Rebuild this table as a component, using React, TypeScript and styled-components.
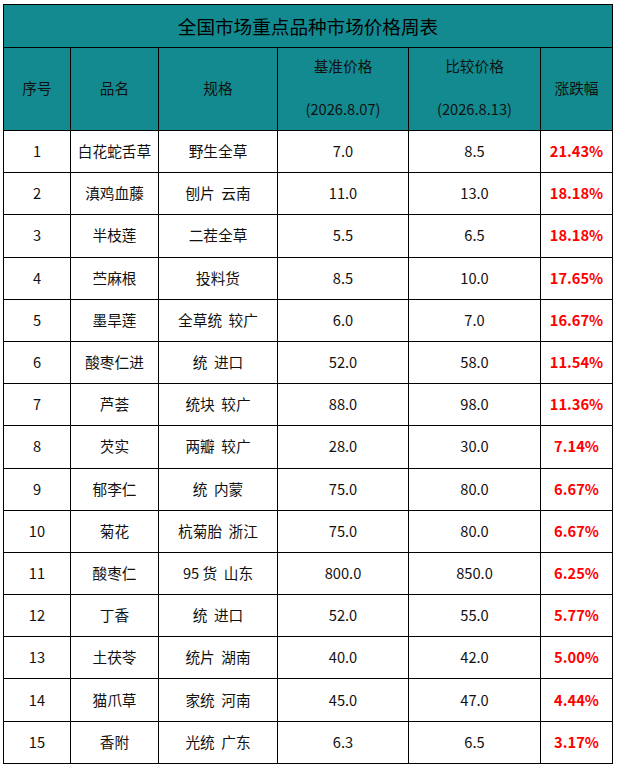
import React from "react";
import styled, { createGlobalStyle } from "styled-components";

const GlobalStyle = createGlobalStyle`
  html, body { margin: 0; padding: 0; background: #ffffff; }
  body { font-family: "Noto Sans CJK SC", "Noto Sans", sans-serif; }
`;

const Page = styled.div`
  padding: 4px 0 0 3px;
`;

const Table = styled.div`
  display: grid;
  width: 608px;
  grid-template-columns: 66px 87px 118px 130px 131px 71px;
  grid-template-rows: 42px 82px repeat(15, 41.2px);
  gap: 1px;
  padding: 1px;
  background: #000000;
`;

const TitleCell = styled.div`
  grid-column: 1 / -1;
  background: #128a8f;
  display: flex;
  align-items: center;
  justify-content: center;
  padding-bottom: 1px;
  font-size: 18.6px;
  color: #000;
`;

const HeadCell = styled.div`
  background: #128a8f;
  display: flex;
  flex-direction: column;
  align-items: center;
  justify-content: center;
  gap: 21.5px;
  padding-bottom: 3px;
  font-size: 14.67px;
  line-height: 21.5px;
  color: #111;
`;

const Cell = styled.div<{ $up?: boolean }>`
  background: #ffffff;
  display: flex;
  align-items: center;
  justify-content: center;
  padding-bottom: 2px;
  font-size: 14.67px;
  color: ${(p) => (p.$up ? "#ff0000" : "#111")};
  font-weight: ${(p) => (p.$up ? 700 : 400)};
  white-space: pre;
`;

const rows: [string, string, string, string, string, string][] = [
  ["1", "白花蛇舌草", "野生全草", "7.0", "8.5", "21.43%"],
  ["2", "滇鸡血藤", "刨片  云南", "11.0", "13.0", "18.18%"],
  ["3", "半枝莲", "二茬全草", "5.5", "6.5", "18.18%"],
  ["4", "苎麻根", "投料货", "8.5", "10.0", "17.65%"],
  ["5", "墨旱莲", "全草统  较广", "6.0", "7.0", "16.67%"],
  ["6", "酸枣仁进", "统  进口", "52.0", "58.0", "11.54%"],
  ["7", "芦荟", "统块  较广", "88.0", "98.0", "11.36%"],
  ["8", "芡实", "两瓣  较广", "28.0", "30.0", "7.14%"],
  ["9", "郁李仁", "统  内蒙", "75.0", "80.0", "6.67%"],
  ["10", "菊花", "杭菊胎  浙江", "75.0", "80.0", "6.67%"],
  ["11", "酸枣仁", "95 货  山东", "800.0", "850.0", "6.25%"],
  ["12", "丁香", "统  进口", "52.0", "55.0", "5.77%"],
  ["13", "土茯苓", "统片  湖南", "40.0", "42.0", "5.00%"],
  ["14", "猫爪草", "家统  河南", "45.0", "47.0", "4.44%"],
  ["15", "香附", "光统  广东", "6.3", "6.5", "3.17%"],
];

export default function App() {
  return (
    <>
      <GlobalStyle />
      <Page>
        <Table>
          <TitleCell>全国市场重点品种市场价格周表</TitleCell>
          <HeadCell>序号</HeadCell>
          <HeadCell>品名</HeadCell>
          <HeadCell>规格</HeadCell>
          <HeadCell>
            <span>基准价格</span>
            <span>(2026.8.07)</span>
          </HeadCell>
          <HeadCell>
            <span>比较价格</span>
            <span>(2026.8.13)</span>
          </HeadCell>
          <HeadCell>涨跌幅</HeadCell>
          {rows.map((r) => (
            <React.Fragment key={r[0]}>
              <Cell>{r[0]}</Cell>
              <Cell>{r[1]}</Cell>
              <Cell>{r[2]}</Cell>
              <Cell>{r[3]}</Cell>
              <Cell>{r[4]}</Cell>
              <Cell $up>{r[5]}</Cell>
            </React.Fragment>
          ))}
        </Table>
      </Page>
    </>
  );
}
